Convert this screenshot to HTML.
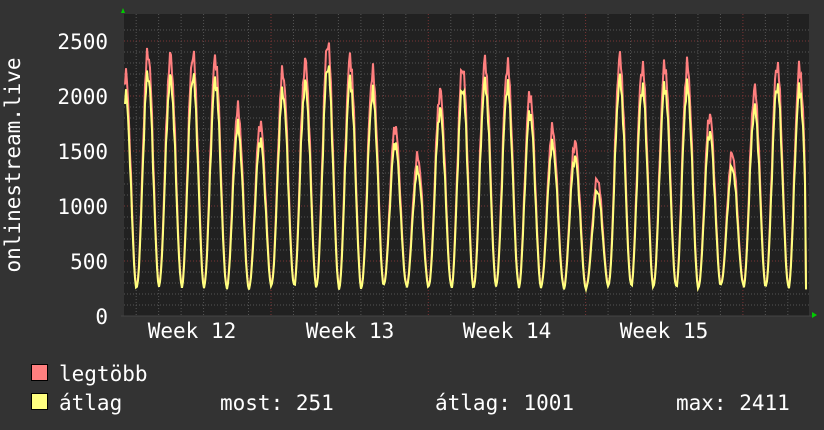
<!DOCTYPE html>
<html><head><meta charset="utf-8"><style>
html,body{margin:0;padding:0;background:#333;width:824px;height:430px;overflow:hidden}
svg{display:block}
text{font-family:"DejaVu Sans Mono","Liberation Mono",monospace;font-size:21px;fill:#fff}
</style></head><body>
<svg id="s" width="824" height="430" xmlns="http://www.w3.org/2000/svg">
<rect width="824" height="430" fill="#333"/>
<rect x="124" y="14" width="685" height="302" fill="#212121"/>
<g id="grid"></g>
<path id="mx" fill="none" stroke="#ff7f7f" stroke-width="2"/>
<path id="av" fill="none" stroke="#ffff7f" stroke-width="2"/>
<line x1="121" y1="316" x2="812" y2="316" stroke="#444" stroke-width="1"/>
<polygon points="121,13 125,13 123,8" fill="#0c0"/>
<polygon points="812,312 812,318 817,315" fill="#0c0"/>
<g text-anchor="end">
<text x="108" y="49">2500</text>
<text x="108" y="104">2000</text>
<text x="108" y="159">1500</text>
<text x="108" y="214">1000</text>
<text x="108" y="269">500</text>
<text x="108" y="324">0</text>
</g>
<text x="20" y="165" transform="rotate(-90 20 165)" text-anchor="middle">onlinestream.live</text>
<g text-anchor="middle">
<text x="192" y="338">Week 12</text>
<text x="350" y="338">Week 13</text>
<text x="507" y="338">Week 14</text>
<text x="664" y="338">Week 15</text>
</g>
<rect x="31.5" y="364.5" width="16" height="16" fill="#ff7f7f" stroke="#000"/>
<rect x="31.5" y="393.5" width="16" height="16" fill="#ffff7f" stroke="#000"/>
<text x="59" y="381">legtöbb</text>
<text x="59" y="410">átlag</text>
<text x="220" y="410">most: 251</text>
<text x="435" y="410">átlag: 1001</text>
<text x="676" y="410">max: 2411</text>
</svg>
<script>
var g=document.getElementById('grid'),h='';
function Y(v){return 316-v*0.11;}
for(var v=100;v<=2600;v+=100){var y=Y(v);if(y<14)break;var maj=v%500==0;
h+='<line x1="124" x2="809" y1="'+y+'" y2="'+y+'" stroke="'+(maj?'#7a3535':'#555')+'" stroke-dasharray="1,2"/>';}
var P=157.3/7;
for(var x=271-12*P;x<809;x+=P){if(x<125)continue;var maj=Math.abs(((x-271)/157.3)-Math.round((x-271)/157.3))<0.01;
h+='<line y1="14" y2="316" x1="'+x+'" x2="'+x+'" stroke="'+(maj?'#7a3535':'#555')+'" stroke-dasharray="1,2"/>';}
g.innerHTML=h;
var peaks=[2200,2400,2350,2380,2340,1880,1750,2220,2300,2490,2340,2210,1720,1450,2040,2270,2310,2280,2020,1700,1580,1250,2340,2270,2280,2270,1830,1480,2060,2290,2250];
var x0=125.5;
function val(x,r){var d=(x-x0)/P;var i=Math.round(d);var frac=d-i;if(i<0)i=0;if(i>=peaks.length)i=peaks.length-1;
var pk=peaks[i]*r;var base=250+ (i*37%5)*12;var c=0.5+0.5*Math.cos(2*Math.PI*frac);
var n=Math.sin(x*2.7)*0.03+Math.sin(x*1.3)*0.02;
return base+(pk-base)*Math.pow(c,1.0)*(1+n);}
var a='',b='';
for(var x=125;x<=807;x+=1){var vm=val(x,1),va=val(x,0.92)-10;if(x>=806){vm=251;va=251;}
a+=(x==125?'M':'L')+x+','+Y(vm).toFixed(1);b+=(x==125?'M':'L')+x+','+Y(va).toFixed(1);}
document.getElementById('mx').setAttribute('d',a);document.getElementById('av').setAttribute('d',b);
</script>
</body></html>
